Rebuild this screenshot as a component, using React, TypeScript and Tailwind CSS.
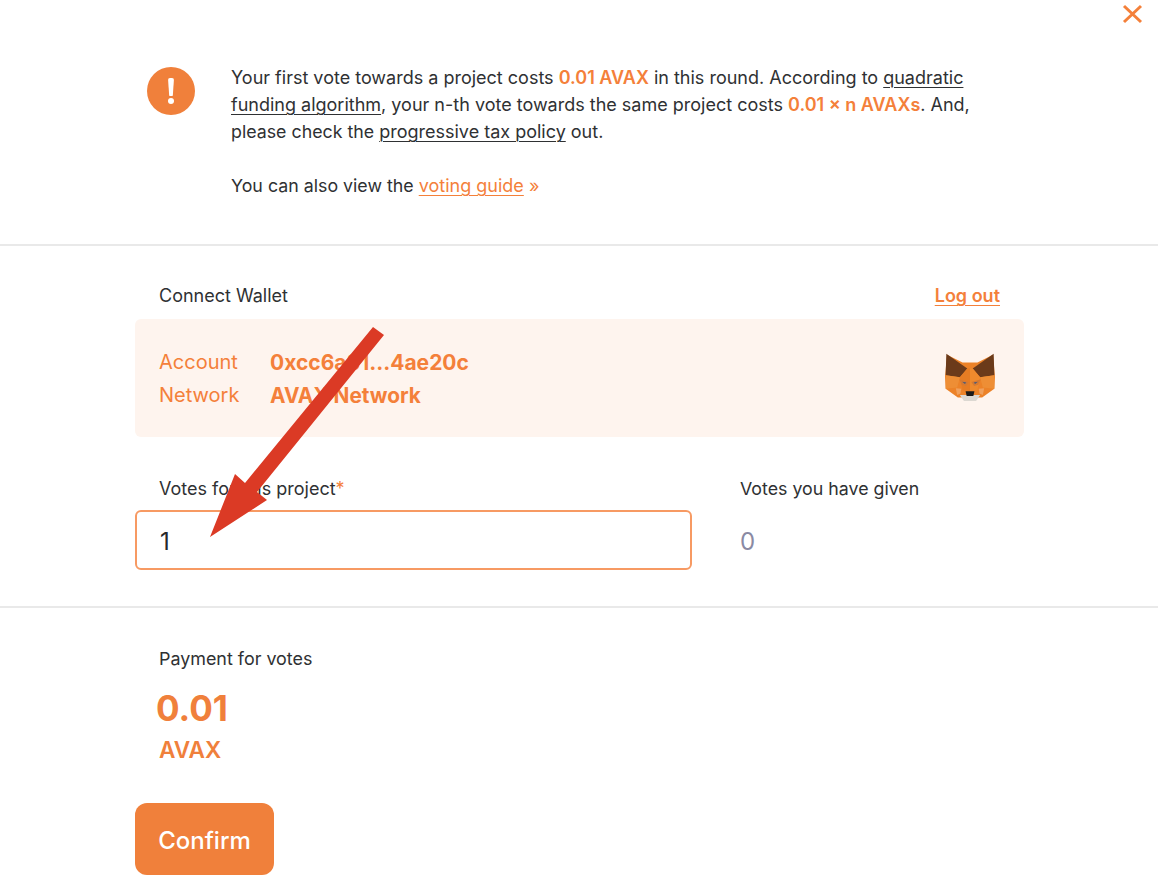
import React from "react";

function Fox() {
  return (
    <svg width="50" height="48" viewBox="76 70 148 142" className="block mb-[3px]">
      <polygon points="82,75 128,98 172,98 218,75 224,140 222,176 186,202 114,202 78,176 76,140" fill="#ec8228" />
      <polygon points="80,72 142,116 120,142 78,136" fill="#6b3a1a" />
      <polygon points="220,72 158,116 180,142 222,136" fill="#6b3a1a" />
      <polygon points="120,142 142,116 150,116 150,182 128,180" fill="#e67c23" />
      <polygon points="180,142 158,116 150,116 150,182 172,180" fill="#ee8a2d" />
      <polygon points="78,136 120,142 112,172 78,176" fill="#ee8e35" />
      <polygon points="222,136 180,142 188,172 222,176" fill="#ee8e35" />
      <polygon points="118,148 146,156 138,168 126,164" fill="#d57a33" />
      <polygon points="182,148 154,156 162,168 174,164" fill="#d57a33" />
      <polygon points="127,155 139,157 135,162" fill="#44597c" />
      <polygon points="173,155 161,157 165,162" fill="#44597c" />
      <polygon points="108,174 124,176 122,190 112,194" fill="#f0a05c" />
      <polygon points="192,174 176,176 178,190 188,194" fill="#f0a05c" />
      <polygon points="120,194 180,194 168,212 132,212" fill="#dcd8d2" />
      <polygon points="137,183 163,183 160,197 140,197" fill="#1c1a18" />
    </svg>
  );
}

function Arrow() {
  return (
    <svg
      className="absolute left-0 top-0 pointer-events-none"
      width="1158"
      height="888"
      viewBox="0 0 1158 888"
    >
      <polygon
        points="373,327 384,335 257,492 267,500 210,537 235,474 245,483"
        fill="#db3a25"
      />
    </svg>
  );
}

const A = "underline decoration-1 underline-offset-[3px]";

export default function App() {
  return (
    <div className="relative w-[1158px] h-[888px] overflow-hidden bg-white text-[#2f3133] font-['Inter',sans-serif] text-[18px]">
      <svg
        className="absolute left-[1122px] top-[4px]"
        width="21"
        height="20"
        viewBox="0 0 21 20"
      >
        <path d="M2 2 L19 18 M19 2 L2 18" stroke="#f4803a" strokeWidth="3" fill="none" />
      </svg>

      <section className="h-[246px] border-b-2 border-[#e9e9e9] flex pl-[147px] pt-[64px]">
        <div className="w-[48px] h-[48px] mt-[3px] rounded-full bg-[#f0803b] flex flex-col items-center justify-center gap-[2px] shrink-0">
          <div className="w-[6px] h-[18px] bg-white rounded-[2px] [clip-path:polygon(0_0,100%_0,80%_100%,20%_100%)]" />
          <div className="w-[6px] h-[6px] bg-white rounded-full" />
        </div>
        <div className="ml-[36px] w-[760px] leading-[27px]">
          <p>
            Your first vote towards a project costs{" "}
            <span className="text-[#f4803a] font-semibold">0.01 AVAX</span> in this round. According to{" "}
            <span className={A}>quadratic funding algorithm</span>, your n-th vote towards the same project costs{" "}
            <span className="text-[#f4803a] font-semibold">0.01 × n AVAXs</span>. And,{" "}
            <span className="text-[17.8px]">please check the</span>{" "}
            <span className={A}>progressive tax policy</span> out.
          </p>
          <p className="mt-[27px]">
            <span className="text-[17.8px]">You can also view the</span>{" "}
            <span className={`${A} text-[#f4803a]`}>voting guide</span>{" "}
            <span className="text-[#f4803a]">»</span>
          </p>
        </div>
      </section>

      <section className="h-[362px] border-b-2 border-[#e9e9e9] px-[135px]">
        <div className="w-[889px] flex justify-between items-center pl-[24px] pt-[36px] leading-[27px]">
          <span>Connect Wallet</span>
          <span className="text-[#f4803a] font-semibold underline decoration-1 underline-offset-[3px] pr-[24px]">Log out</span>
        </div>
        <div className="w-[889px] h-[118px] mt-[10px] rounded-[6px] bg-[#fef4ee] flex items-center justify-between pl-[24px] pr-[29px]">
          <div className="grid grid-cols-[111px_auto] pt-[2px] leading-[33px] text-[20px] text-[#f4803a]">
            <span>Account</span>
            <span className="font-bold text-[21px]">0xcc6a81...4ae20c</span>
            <span>Network</span>
            <span className="font-bold text-[20.8px]">AVAX Network</span>
          </div>
          <Fox />
        </div>
        <div className="flex mt-[38px]">
          <div className="w-[557px]">
            <div className="pl-[24px] leading-[27px]">
              Votes for this project<span className="text-[#f4803a]">*</span>
            </div>
            <div className="mt-[8px] h-[60px] rounded-[6px] border-2 border-[#f79a63] flex items-center pl-[23px] pt-[3px] text-[24px] text-[#26282b]">
              1
            </div>
          </div>
          <div className="ml-[48px]">
            <div className="leading-[27px] text-[17.8px]">Votes you have given</div>
            <div className="mt-[8px] h-[60px] pt-[3px] flex items-center text-[24px] text-[#8a8aa3]">0</div>
          </div>
        </div>
      </section>

      <section className="px-[135px] pt-[37px]">
        <div className="pl-[24px] leading-[27px] text-[17.9px]">Payment for votes</div>
        <div className="pl-[21px] mt-[14px] text-[35px] leading-[44px] font-bold text-[#f0803b]">0.01</div>
        <div className="pl-[24px] mt-[4px] text-[22.6px] leading-[32px] font-semibold text-[#f0803b]">AVAX</div>
        <button className="mt-[37px] w-[139px] h-[72px] pt-[3px] rounded-[12px] bg-[#f0803b] text-white text-[24px] font-medium flex items-center justify-center">
          Confirm
        </button>
      </section>

      <Arrow />
    </div>
  );
}
